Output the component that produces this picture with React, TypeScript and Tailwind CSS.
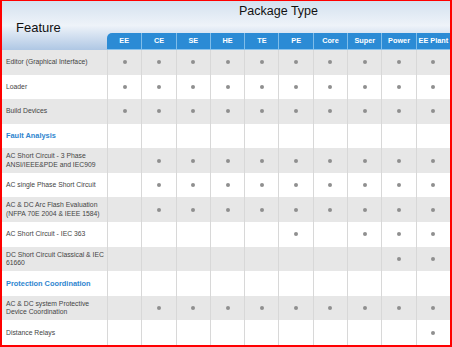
const PACKAGES = ["EE", "CE", "SE", "HE", "TE", "PE", "Core", "Super", "Power", "EE Plant"];

type Row =
  | { kind: "section"; title: string }
  | { kind: "feature"; lines: string[]; has: number[] };

const ALL = [0, 1, 2, 3, 4, 5, 6, 7, 8, 9];
const NO_EE = [1, 2, 3, 4, 5, 6, 7, 8, 9];

const ROWS: Row[] = [
  { kind: "feature", lines: ["Editor (Graphical Interface)"], has: ALL },
  { kind: "feature", lines: ["Loader"], has: ALL },
  { kind: "feature", lines: ["Build Devices"], has: ALL },
  { kind: "section", title: "Fault Analysis" },
  { kind: "feature", lines: ["AC Short Circuit - 3 Phase", "ANSI/IEEE&PDE and IEC909"], has: NO_EE },
  { kind: "feature", lines: ["AC single Phase Short Circuit"], has: NO_EE },
  { kind: "feature", lines: ["AC & DC Arc Flash Evaluation", "(NFPA 70E 2004 & IEEE 1584)"], has: NO_EE },
  { kind: "feature", lines: ["AC Short Circuit - IEC 363"], has: [5, 7, 8, 9] },
  { kind: "feature", lines: ["DC Short Circuit Classical & IEC", "61660"], has: [8, 9] },
  { kind: "section", title: "Protection Coordination" },
  { kind: "feature", lines: ["AC & DC system Protective", "Device Coordination"], has: NO_EE },
  { kind: "feature", lines: ["Distance Relays"], has: [9] },
];

function Dot() {
  return <span className="block h-[4px] w-[4px] rounded-full bg-[#8f8f8f]" />;
}

export default function App() {
  return (
    <div
      className="box-border h-[347px] w-[452px] overflow-hidden border-2 border-t border-[#ff0000] bg-white"
      style={{ fontFamily: '"Liberation Sans", Arial, sans-serif' }}
    >
      {/* Header */}
      <div className="flex h-[49px] bg-gradient-to-b from-[#d4e1ef] via-[#eef3f9] to-[#afc7e4]">
        <div className="w-[105px] shrink-0 pl-[14px] pt-[19px] text-[13px] leading-[15px] text-[#111]">
          Feature
        </div>
        <div className="flex flex-1 flex-col">
          <div className="flex-1 pt-[3px] text-center text-[12.5px] leading-[14px] text-[#111]">
            Package Type
          </div>
          <div className="grid h-[17px] grid-cols-10 overflow-hidden rounded-tl-[5px] border-b border-[#8cc3ec] bg-[#2b8bd5]">
            {PACKAGES.map((p, i) => (
              <div
                key={p}
                className={`flex items-center justify-center whitespace-nowrap text-[7.3px] font-bold text-white ${
                  i > 0 ? "border-l border-[#80bde9]" : ""
                }`}
              >
                {p}
              </div>
            ))}
          </div>
        </div>
      </div>

      {/* Body */}
      <div className="flex h-[295px] flex-col">
        {ROWS.map((row, r) => (
          <div
            key={r}
            className={`flex flex-1 ${r % 2 === 0 ? "bg-[#e7e7e7]" : "bg-white"}`}
          >
            <div className="flex w-[105px] shrink-0 items-center pl-[4px]">
              {row.kind === "section" ? (
                <span className="text-[7.4px] font-bold text-[#2f86cf]">{row.title}</span>
              ) : (
                <span className="text-[6.8px] leading-[8.3px] text-[#444]">
                  {row.lines.map((l, i) => (
                    <span key={i} className="block whitespace-nowrap">
                      {l}
                    </span>
                  ))}
                </span>
              )}
            </div>
            <div className="grid flex-1 grid-cols-10">
              {PACKAGES.map((p, i) => (
                <div
                  key={p}
                  className="flex items-center justify-center border-l border-[#d8d8d8]"
                >
                  {row.kind === "feature" && row.has.includes(i) && <Dot />}
                </div>
              ))}
            </div>
          </div>
        ))}
      </div>
    </div>
  );
}
